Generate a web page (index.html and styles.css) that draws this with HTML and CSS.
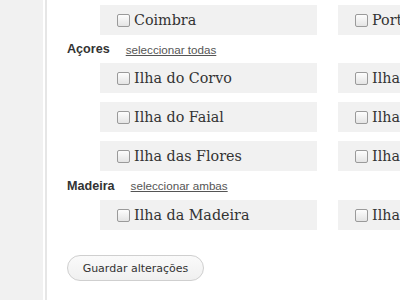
FILE: index.html
```html
<!DOCTYPE html>
<html lang="pt">
<head>
<meta charset="utf-8">
<link rel="stylesheet" href="styles.css">
</head>
<body>
<div class="sidebar"></div>
<div class="main">
  <div class="grid">
    <label class="item"><span class="cb"></span>Coimbra</label>
    <label class="item"><span class="cb"></span>Portalegre</label>
  </div>
  <div class="group"><span class="gname">Açores</span><a class="sel" href="#">seleccionar todas</a></div>
  <div class="grid">
    <label class="item"><span class="cb"></span>Ilha do Corvo</label>
    <label class="item"><span class="cb"></span>Ilha Graciosa</label>
    <label class="item"><span class="cb"></span>Ilha do Faial</label>
    <label class="item"><span class="cb"></span>Ilha Terceira</label>
    <label class="item"><span class="cb"></span>Ilha das Flores</label>
    <label class="item"><span class="cb"></span>Ilha de São Jorge</label>
  </div>
  <div class="group group-tall"><span class="gname">Madeira</span><a class="sel" href="#">seleccionar ambas</a></div>
  <div class="grid">
    <label class="item"><span class="cb"></span>Ilha da Madeira</label>
    <label class="item"><span class="cb"></span>Ilha de Porto Santo</label>
  </div>
  <button class="save">Guardar alterações</button>
</div>
</body>
</html>
```
FILE: styles.css
```css
html, body {
  margin: 0;
  padding: 0;
  height: 100%;
  background: #fff;
  overflow: hidden;
}
body {
  display: flex;
  width: 400px;
  height: 300px;
}
.sidebar {
  width: 43px;
  flex: none;
  background: #f1f1f1;
}
.main {
  margin-left: 2px;
  border-left: 2px solid #e6e6e6;
  padding: 5px 0 0 20px;
  flex: none;
  width: 600px;
}
.grid {
  margin-left: 33px;
  display: grid;
  grid-template-columns: 217px 217px;
  column-gap: 21px;
  row-gap: 9px;
}
.item {
  height: 30px;
  background: #f1f1f1;
  display: flex;
  align-items: center;
  padding-left: 17px;
  font-family: "DejaVu Serif", serif;
  font-size: 14.3px;
  color: #333;
  white-space: nowrap;
  overflow: hidden;
}
.cb {
  width: 11px;
  height: 11px;
  border: 1px solid #9a9a9a;
  border-radius: 2px;
  background: linear-gradient(#fdfdfd, #e4e4e4);
  margin-right: 4px;
  flex: none;
}
.group {
  height: 28px;
  display: flex;
  align-items: center;
  gap: 16px;
}
.group-tall {
  height: 29px;
}
.gname {
  font-family: "Liberation Sans", Arial, sans-serif;
  font-weight: bold;
  font-size: 12.6px;
  color: #333;
}
.sel {
  font-family: "Liberation Sans", Arial, sans-serif;
  font-size: 11.65px;
  color: #555;
  text-decoration: underline;
}
.save {
  display: block;
  margin-top: 25px;
  width: 137px;
  height: 26px;
  border: 1px solid #cfcfcf;
  border-radius: 13px;
  background: linear-gradient(#fafafa, #f0f0f0);
  font-family: "DejaVu Sans", sans-serif;
  font-size: 11px;
  color: #333;
  padding: 0;
}
```
